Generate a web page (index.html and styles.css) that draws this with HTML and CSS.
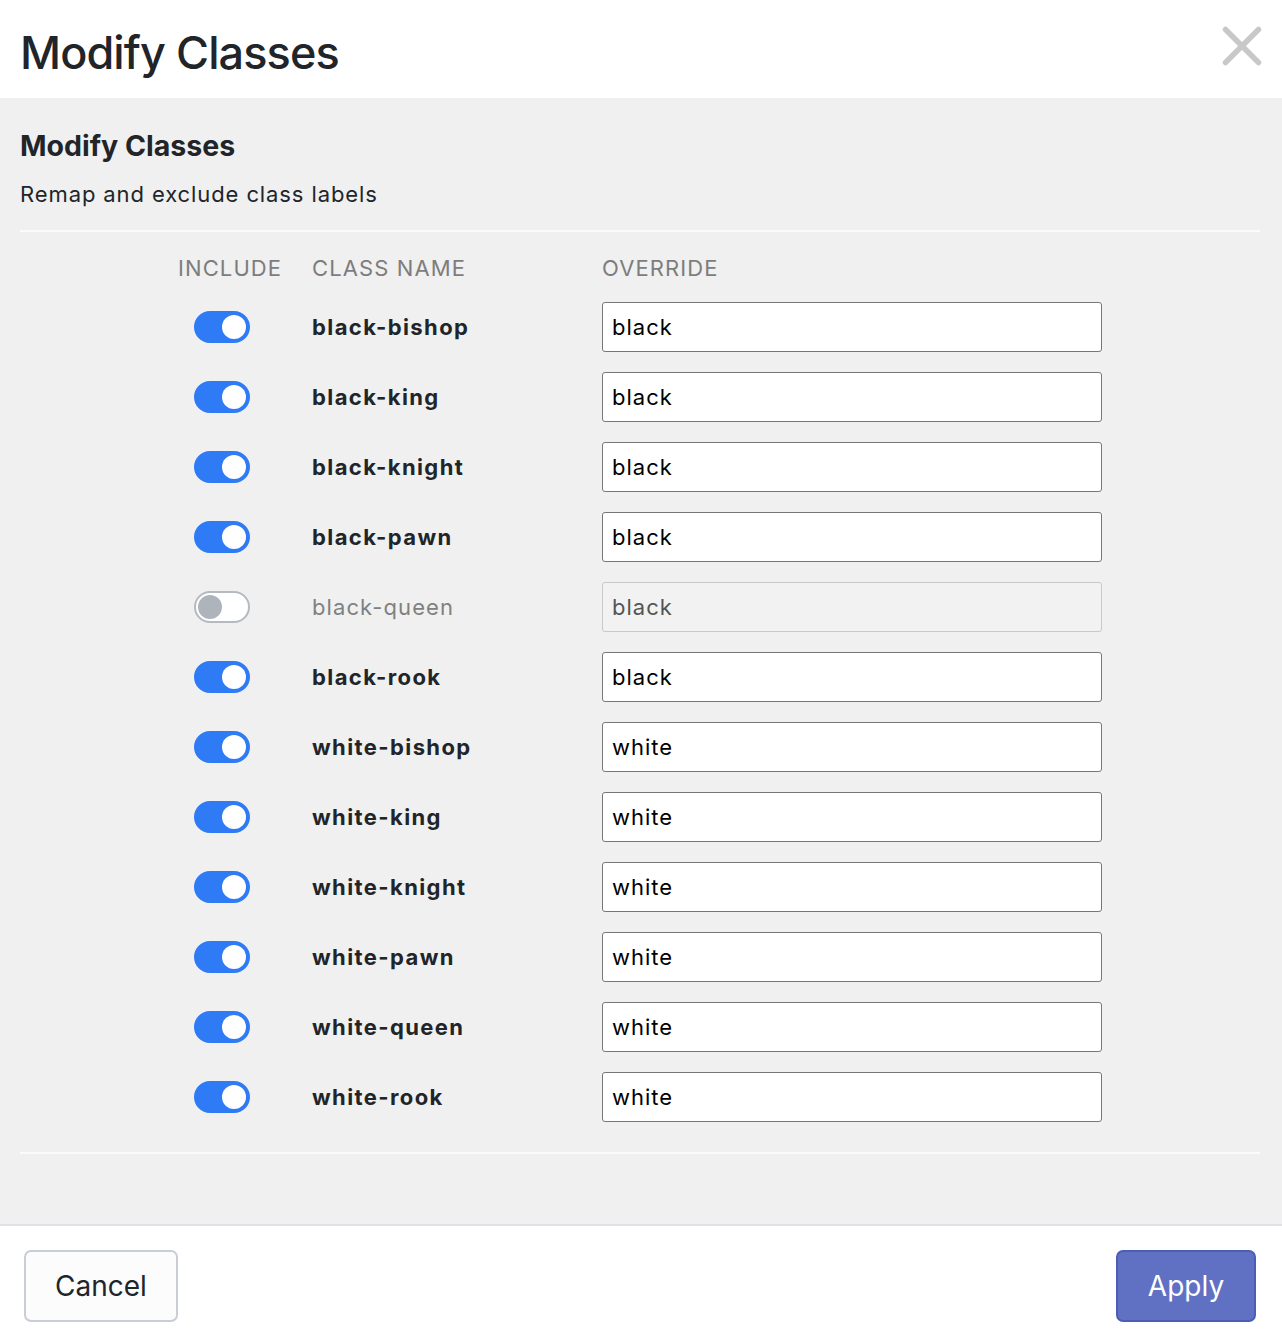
FILE: index.html
```html
<!DOCTYPE html>
<html>
<head>
<meta charset="utf-8">
<link rel="stylesheet" href="styles.css">
</head>
<body>
<div class="modal">
  <header class="modal-header">
    <h1 class="modal-title">Modify Classes</h1>
    <button class="close" aria-label="Close">
      <svg width="40" height="40" viewBox="0 0 40 40"><path d="M3.5 3.5 L36.5 36.5 M36.5 3.5 L3.5 36.5" stroke="#c8c8c8" stroke-width="5.5" stroke-linecap="round" fill="none"/></svg>
    </button>
  </header>
  <main class="modal-body">
    <h2 class="section-title">Modify Classes</h2>
    <p class="section-sub">Remap and exclude class labels</p>
    <div class="rule"></div>
    <div class="table">
      <div class="th">INCLUDE</div><div class="th">CLASS NAME</div><div class="th">OVERRIDE</div>

      <div class="cell"><span class="switch on"></span></div><div class="cell name">black-bishop</div><div class="cell"><input class="field" value="black"></div>
      <div class="cell"><span class="switch on"></span></div><div class="cell name">black-king</div><div class="cell"><input class="field" value="black"></div>
      <div class="cell"><span class="switch on"></span></div><div class="cell name">black-knight</div><div class="cell"><input class="field" value="black"></div>
      <div class="cell"><span class="switch on"></span></div><div class="cell name">black-pawn</div><div class="cell"><input class="field" value="black"></div>
      <div class="cell"><span class="switch"></span></div><div class="cell name off">black-queen</div><div class="cell"><input class="field" value="black" disabled></div>
      <div class="cell"><span class="switch on"></span></div><div class="cell name">black-rook</div><div class="cell"><input class="field" value="black"></div>
      <div class="cell"><span class="switch on"></span></div><div class="cell name">white-bishop</div><div class="cell"><input class="field" value="white"></div>
      <div class="cell"><span class="switch on"></span></div><div class="cell name">white-king</div><div class="cell"><input class="field" value="white"></div>
      <div class="cell"><span class="switch on"></span></div><div class="cell name">white-knight</div><div class="cell"><input class="field" value="white"></div>
      <div class="cell"><span class="switch on"></span></div><div class="cell name">white-pawn</div><div class="cell"><input class="field" value="white"></div>
      <div class="cell"><span class="switch on"></span></div><div class="cell name">white-queen</div><div class="cell"><input class="field" value="white"></div>
      <div class="cell"><span class="switch on"></span></div><div class="cell name">white-rook</div><div class="cell"><input class="field" value="white"></div>
    </div>
    <div class="rule"></div>
  </main>
  <footer class="modal-footer">
    <button class="btn cancel">Cancel</button>
    <button class="btn apply">Apply</button>
  </footer>
</div>
</body>
</html>
```

FILE: styles.css
```css
* { box-sizing: border-box; }
html, body { margin: 0; padding: 0; }
body {
  font-family: Inter, "Liberation Sans", sans-serif;
  color: #212529;
  background: #fff;
  width: 1282px;
  height: 1342px;
  overflow: hidden;
}
.modal { display: flex; flex-direction: column; height: 1342px; }
.modal-header {
  height: 98px;
  background: #fff;
  display: flex;
  align-items: flex-start;
  justify-content: space-between;
  padding: 0 20px 0 20px;
}
.modal-title {
  margin: 25px 0 0 0;
  font-size: 45px;
  font-weight: 500;
  line-height: 56px;
  letter-spacing: -0.9px;
}
.close {
  border: 0;
  background: none;
  padding: 0;
  margin: 26px 0 0 0;
  width: 40px;
  height: 40px;
  cursor: pointer;
}
.modal-body {
  background: #f0f0f0;
  flex: 0 0 1126px;
  padding: 0 22px 0 20px;
}
.section-title {
  margin: 30px 0 0 0;
  font-size: 28.5px;
  line-height: 36px;
  font-weight: 700;
}
.section-sub {
  margin: 15px 0 0 0;
  font-size: 22px;
  line-height: 30px;
  letter-spacing: 0.9px;
}
.rule { height: 2px; background: #fbfbfb; }
.section-sub + .rule { margin-top: 21px; }
.table {
  display: grid;
  grid-template-columns: 134px 290px 500px;
  grid-template-rows: 48px;
  grid-auto-rows: 70px;
  justify-content: center;
  padding: 12px 0 20px 0;
}
.th {
  font-size: 22px;
  color: #7d7d7d;
  display: flex;
  align-items: center;
  letter-spacing: 1.1px;
}
.cell { display: flex; align-items: center; height: 70px; font-size: 22px; }
.name { font-weight: 700; letter-spacing: 1.4px; }
.name.off { font-weight: 400; color: #808080; letter-spacing: 1.1px; }
.switch {
  margin-left: 16px;
  width: 56px;
  height: 32px;
  border-radius: 16px;
  background: #fff;
  border: 2px solid #b5bac1;
  position: relative;
}
.switch::after {
  content: "";
  position: absolute;
  left: 2px;
  top: 2px;
  width: 24px;
  height: 24px;
  border-radius: 50%;
  background: #aeb4bc;
}
.switch.on { background: #2f7bf6; border-color: #2f7bf6; }
.switch.on::after { left: auto; right: 2px; background: #fff; }
.field {
  width: 500px;
  height: 50px;
  border: 1.5px solid #767676;
  border-radius: 3px;
  background: #fff;
  font-family: Inter, "Liberation Sans", sans-serif;
  font-size: 22px;
  letter-spacing: 1px;
  color: #000;
  padding: 0 9px;
  outline: none;
}
.field:disabled {
  background: #f2f2f2;
  border-color: #c9c9c9;
  color: #545454;
}
.modal-footer {
  flex: 1;
  background: #fff;
  border-top: 2px solid #dee2e6;
  display: flex;
  justify-content: space-between;
  align-items: flex-start;
  padding: 24px 26px 0 24px;
}
.btn {
  height: 72px;
  font-family: Inter, "Liberation Sans", sans-serif;
  font-size: 28px;
  border-radius: 7px;
  cursor: pointer;
}
.cancel {
  width: 154px;
  background: #fcfcfc;
  border: 2px solid #c9cdd6;
  color: #212529;
}
.apply {
  width: 140px;
  background: #6070c2;
  border: 2px solid #4c5db6;
  color: #fff;
}
```
